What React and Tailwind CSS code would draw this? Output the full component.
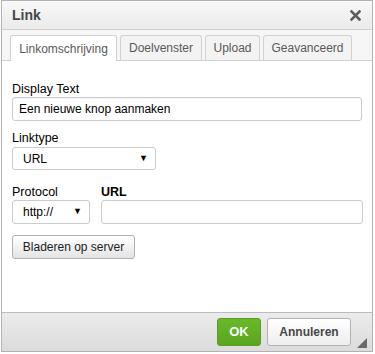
export default function App() {
  const font = { fontFamily: '"Liberation Sans", Arial, sans-serif' };
  return (
    <div className="w-[375px] h-[354px] bg-white pl-[1px]" style={font}>
      <div className="w-[372px] h-[352px] border border-[#b2b2b2] flex flex-col bg-white">
        {/* Title bar */}
        <div className="h-[29px] shrink-0 flex items-center justify-between pl-[10px] pr-[11px] bg-gradient-to-b from-[#f8f8f8] to-[#ebebeb] border-b border-[#d1d1d1]">
          <span className="text-[14px] font-bold text-[#474747]">Link</span>
          <svg width="11" height="11" viewBox="0 0 11 11">
            <path d="M1.5 1.5 L9.5 9.5 M9.5 1.5 L1.5 9.5" stroke="#5d5d5d" strokeWidth="2.6" strokeLinecap="square" />
          </svg>
        </div>

        {/* Tabs */}
        <div className="h-[31px] shrink-0 bg-[#f6f6f6] border-b border-[#d1d1d1] flex items-end gap-[3px] pl-[8px] text-[12px] text-[#595959]">
          <div className="w-[107px] h-[26px] flex items-center justify-center bg-white border border-b-0 border-[#d1d1d1] rounded-t-[3px] -mb-px">
            Linkomschrijving
          </div>
          <div className="w-[82px] h-[25px] flex items-center justify-center bg-[#f3f3f3] border border-b-0 border-[#d1d1d1] rounded-t-[3px]">
            Doelvenster
          </div>
          <div className="w-[55px] h-[25px] flex items-center justify-center bg-[#f3f3f3] border border-b-0 border-[#d1d1d1] rounded-t-[3px]">
            Upload
          </div>
          <div className="w-[89px] h-[25px] flex items-center justify-center bg-[#f3f3f3] border border-b-0 border-[#d1d1d1] rounded-t-[3px]">
            Geavanceerd
          </div>
        </div>

        {/* Content */}
        <div className="flex-1 px-[10px] pt-[21px] text-[12px] text-[#000]">
          <div className="leading-[15px] text-[12.5px]">Display Text</div>
          <div className="w-[350px] h-[24px] border border-[#c9cccf] rounded-[3px] flex items-center px-[6px] shadow-[inset_0_1px_1px_rgba(0,0,0,0.05)]">
            Een nieuwe knop aanmaken
          </div>

          <div className="leading-[15px] text-[12.5px] mt-[10px] mb-[1px]">Linktype</div>
          <div className="w-[144px] h-[23px] border border-[#c9cccf] rounded-[3px] flex items-center justify-between pl-[10px] pr-[7px]">
            <span>URL</span>
            <span className="text-[9px]">▼</span>
          </div>

          <div className="flex gap-[11px] mt-[15px]">
            <div>
              <div className="leading-[15px] text-[12.5px]">Protocol</div>
              <div className="w-[78px] h-[24px] border border-[#c9cccf] rounded-[3px] flex items-center justify-between pl-[10px] pr-[7px]">
                <span>http://</span>
                <span className="text-[9px]">▼</span>
              </div>
            </div>
            <div>
              <div className="leading-[15px] text-[12.5px] font-bold">URL</div>
              <div className="w-[262px] h-[24px] border border-[#c9cccf] rounded-[3px]"></div>
            </div>
          </div>

          <div className="mt-[11px] w-[123px] h-[24px] border border-[#b1b1b1] rounded-[3px] bg-gradient-to-b from-[#ffffff] to-[#e4e4e4] flex items-center justify-center text-[#222]">
            Bladeren op server
          </div>
        </div>

        {/* Footer */}
        <div className="h-[39px] shrink-0 bg-gradient-to-b from-[#ebebeb] to-[#dcdcdc] border-t border-[#bcbcbc] flex items-center justify-end pr-[21px] gap-[6px] relative">
          <div className="w-[44px] h-[28px] rounded-[3px] bg-gradient-to-b from-[#69b929] to-[#5aa51f] border border-[#5b9c22] flex items-center justify-center text-white font-bold text-[13px]">
            OK
          </div>
          <div className="w-[84px] h-[28px] rounded-[3px] bg-gradient-to-b from-[#ffffff] to-[#eeeeee] border border-[#b1b1b1] flex items-center justify-center text-[#474747] font-bold text-[12px]">
            Annuleren
          </div>
          <svg className="absolute right-[5px] bottom-[3px]" width="10" height="10" viewBox="0 0 10 10">
            <path d="M10 0 L10 10 L0 10 Z" fill="#6a6a6a" />
          </svg>
        </div>
      </div>
    </div>
  );
}
